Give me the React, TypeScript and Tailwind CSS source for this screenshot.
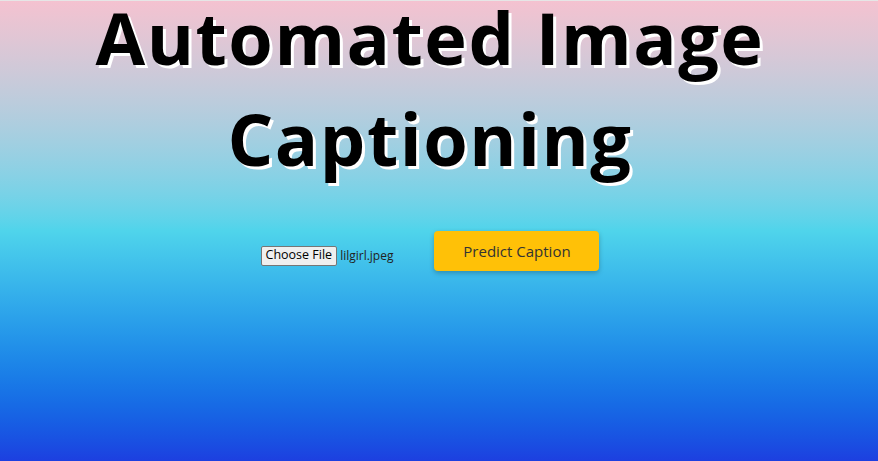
import React from "react";

const App: React.FC = () => {
  return (
    <div className="w-full h-[461px] overflow-hidden border-t border-[#e6e6e6] bg-gradient-to-b from-[#f4c2d0] via-[#4fd4eb] to-[#1d3fe0] font-['Open_Sans',sans-serif]">
      <div className="pr-[18px] flex flex-col items-center">
        {/* titre */}
        <h1 className="flex flex-col items-center gap-[41px] mt-[6px] text-[72px] leading-[60px] font-bold text-black tracking-[1.5px] [text-shadow:3px_3px_0_#fff] whitespace-nowrap">
          <span>Automated Image</span>
          <span>Captioning</span>
        </h1>

        <div className="flex items-center mt-[63px]">
          <div className="flex items-center mt-[9px]">
            <button className="h-[20px] px-[4px] text-[12.5px] leading-none text-black bg-[#efefef] border border-[#767676] rounded-[2px] font-['Open_Sans',sans-serif]">
              Choose File
            </button>
            <span className="ml-[3px] text-[12px] text-[#222]">lilgirl.jpeg</span>
          </div>
          <button className="ml-[41px] w-[165px] h-[40px] bg-[#ffc107] rounded-[4px] shadow-[0_2px_5px_rgba(0,0,0,0.25)] text-[15px] text-[#333]">
            Predict Caption
          </button>
        </div>
      </div>
    </div>
  );
};

export default App;
